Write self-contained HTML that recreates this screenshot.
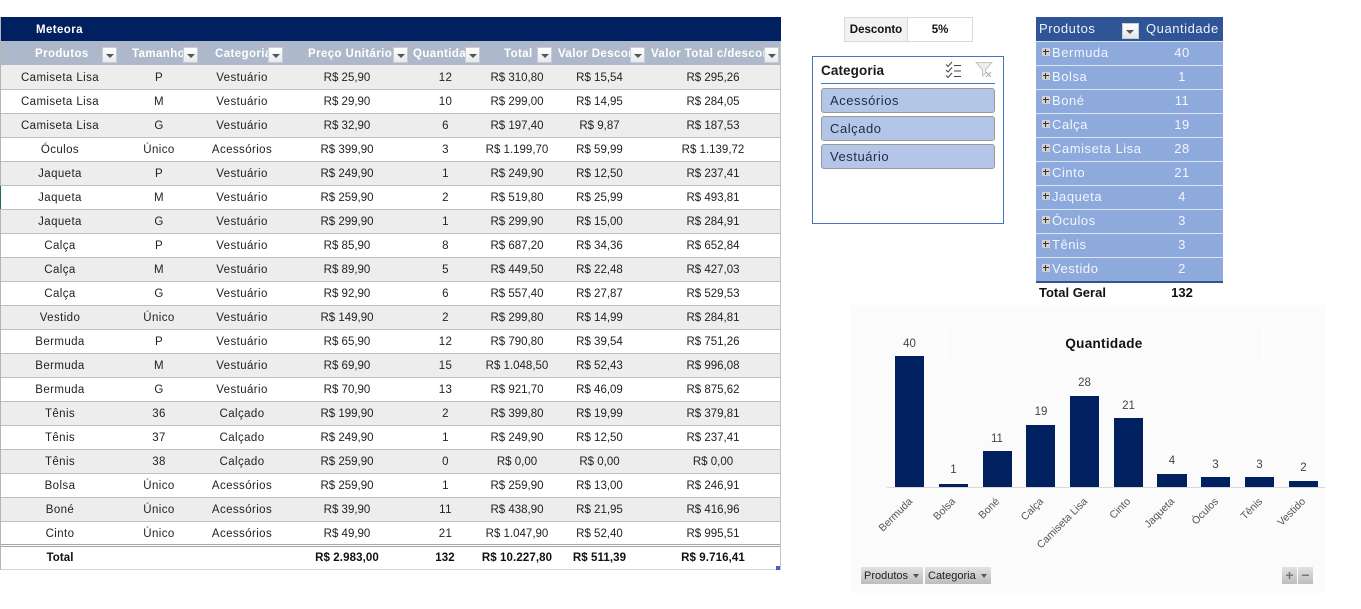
<!DOCTYPE html>
<html lang="pt">
<head>
<meta charset="utf-8">
<title>Meteora</title>
<style>
html,body{margin:0;padding:0;background:#fff;}
body{position:relative;width:1361px;height:609px;overflow:hidden;font-family:"Liberation Sans",sans-serif;color:#222;}
.a{position:absolute;}
#tbl{position:absolute;left:1px;top:65px;width:779px;border-collapse:collapse;table-layout:fixed;font-size:11.5px;letter-spacing:.4px;}
#tbl td{height:24px;padding:2px 0 0;box-sizing:border-box;text-align:center;border-bottom:1px solid #bfbfbf;white-space:nowrap;overflow:hidden;}
#tbl tr:nth-child(odd) td{background:#ededed;}
#tbl td:nth-child(4),#tbl td:nth-child(6),#tbl td:nth-child(7),#tbl td:nth-child(8){letter-spacing:0;}
#tbl td:nth-child(5){padding-left:1px;}
.h{position:absolute;top:41px;height:24px;line-height:26px;color:#fff;font-weight:bold;font-size:11.5px;letter-spacing:.4px;white-space:nowrap;overflow:hidden;}
.fb{position:absolute;width:15px;height:16px;box-sizing:border-box;background:linear-gradient(#fff,#e8e9ec);border:1px solid #c8ccd4;}
.fb:after{content:"";position:absolute;left:3px;top:6px;border-left:4px solid transparent;border-right:4px solid transparent;border-top:4px solid #555;}
.tot{position:absolute;top:546px;height:24px;line-height:24px;font-weight:bold;font-size:11.5px;color:#111;text-align:center;letter-spacing:.1px;white-space:nowrap;}
.sb{position:absolute;left:821px;width:174px;height:25px;box-sizing:border-box;background:#b4c6e7;border:1px solid #999;border-radius:3px;font-size:13px;letter-spacing:.55px;line-height:23px;padding-left:8px;color:#1c2b45;}
.pr{position:absolute;left:1036px;width:187px;height:24px;box-sizing:border-box;background:#8ea9db;border-top:1px solid #d9e4f5;color:#f2f6fd;font-size:13px;letter-spacing:.55px;line-height:23px;}
.pr b{font-weight:normal;position:absolute;left:16px;top:-1px;}
.pr i{font-style:normal;position:absolute;left:116px;width:60px;text-align:center;top:-1px;}
.pr s{position:absolute;left:6px;top:6px;width:8px;height:8px;background:#d0d0d0;text-decoration:none;}
.pr s:before{content:"";position:absolute;left:1px;top:3px;width:6px;height:1px;background:#333;}
.pr s:after{content:"";position:absolute;left:3px;top:1px;width:1px;height:6px;background:#333;}
.gb{position:absolute;top:567px;height:17px;background:linear-gradient(#e2e2e2,#bdbdbd);font-size:11px;line-height:18px;color:#222;padding-left:3px;box-sizing:border-box;}
.gb.dd:after{content:"";position:absolute;right:4px;top:7px;border-left:3.5px solid transparent;border-right:3.5px solid transparent;border-top:4px solid #555;}
</style>
</head>
<body>

<!-- Main table -->
<div class="a" style="left:0;top:17px;width:1px;height:553px;background:#b5b5b5"></div>
<div class="a" style="left:0;top:186px;width:1px;height:23px;background:#1e7145"></div>
<div class="a" style="left:1px;top:17px;width:780px;height:24px;background:#002060"></div>
<div class="a" style="left:36px;top:17px;height:24px;line-height:27px;color:#fff;font-weight:bold;font-size:11.5px;letter-spacing:.4px">Meteora</div>
<div class="a" style="left:1px;top:41px;width:780px;height:24px;background:#adb9ca"></div>

<div class="h" style="left:35px;width:67px">Produtos</div>
<div class="h" style="left:132px;width:51px">Tamanho</div>
<div class="h" style="left:215px;width:53px">Categoria</div>
<div class="h" style="left:308px;width:84px">Preço Unitário</div>
<div class="h" style="left:413px;width:52px">Quantidade</div>
<div class="h" style="left:504px;width:33px">Total</div>
<div class="h" style="left:558px;width:72px">Valor Desconto</div>
<div class="h" style="left:651px;width:113px">Valor Total c/desconto</div>

<div class="fb" style="left:102px;top:47px"></div>
<div class="fb" style="left:183px;top:47px"></div>
<div class="fb" style="left:268px;top:47px"></div>
<div class="fb" style="left:393px;top:47px"></div>
<div class="fb" style="left:465px;top:47px"></div>
<div class="fb" style="left:537px;top:47px"></div>
<div class="fb" style="left:630px;top:47px"></div>
<div class="fb" style="left:764px;top:47px"></div>

<table id="tbl">
<colgroup><col style="width:118px"><col style="width:80px"><col style="width:86px"><col style="width:124px"><col style="width:72px"><col style="width:72px"><col style="width:93px"><col style="width:134px"></colgroup>
<tr><td>Camiseta Lisa</td><td>P</td><td>Vestuário</td><td>R$ 25,90</td><td>12</td><td>R$ 310,80</td><td>R$ 15,54</td><td>R$ 295,26</td></tr>
<tr><td>Camiseta Lisa</td><td>M</td><td>Vestuário</td><td>R$ 29,90</td><td>10</td><td>R$ 299,00</td><td>R$ 14,95</td><td>R$ 284,05</td></tr>
<tr><td>Camiseta Lisa</td><td>G</td><td>Vestuário</td><td>R$ 32,90</td><td>6</td><td>R$ 197,40</td><td>R$ 9,87</td><td>R$ 187,53</td></tr>
<tr><td>Óculos</td><td>Único</td><td>Acessórios</td><td>R$ 399,90</td><td>3</td><td>R$ 1.199,70</td><td>R$ 59,99</td><td>R$ 1.139,72</td></tr>
<tr><td>Jaqueta</td><td>P</td><td>Vestuário</td><td>R$ 249,90</td><td>1</td><td>R$ 249,90</td><td>R$ 12,50</td><td>R$ 237,41</td></tr>
<tr><td>Jaqueta</td><td>M</td><td>Vestuário</td><td>R$ 259,90</td><td>2</td><td>R$ 519,80</td><td>R$ 25,99</td><td>R$ 493,81</td></tr>
<tr><td>Jaqueta</td><td>G</td><td>Vestuário</td><td>R$ 299,90</td><td>1</td><td>R$ 299,90</td><td>R$ 15,00</td><td>R$ 284,91</td></tr>
<tr><td>Calça</td><td>P</td><td>Vestuário</td><td>R$ 85,90</td><td>8</td><td>R$ 687,20</td><td>R$ 34,36</td><td>R$ 652,84</td></tr>
<tr><td>Calça</td><td>M</td><td>Vestuário</td><td>R$ 89,90</td><td>5</td><td>R$ 449,50</td><td>R$ 22,48</td><td>R$ 427,03</td></tr>
<tr><td>Calça</td><td>G</td><td>Vestuário</td><td>R$ 92,90</td><td>6</td><td>R$ 557,40</td><td>R$ 27,87</td><td>R$ 529,53</td></tr>
<tr><td>Vestido</td><td>Único</td><td>Vestuário</td><td>R$ 149,90</td><td>2</td><td>R$ 299,80</td><td>R$ 14,99</td><td>R$ 284,81</td></tr>
<tr><td>Bermuda</td><td>P</td><td>Vestuário</td><td>R$ 65,90</td><td>12</td><td>R$ 790,80</td><td>R$ 39,54</td><td>R$ 751,26</td></tr>
<tr><td>Bermuda</td><td>M</td><td>Vestuário</td><td>R$ 69,90</td><td>15</td><td>R$ 1.048,50</td><td>R$ 52,43</td><td>R$ 996,08</td></tr>
<tr><td>Bermuda</td><td>G</td><td>Vestuário</td><td>R$ 70,90</td><td>13</td><td>R$ 921,70</td><td>R$ 46,09</td><td>R$ 875,62</td></tr>
<tr><td>Tênis</td><td>36</td><td>Calçado</td><td>R$ 199,90</td><td>2</td><td>R$ 399,80</td><td>R$ 19,99</td><td>R$ 379,81</td></tr>
<tr><td>Tênis</td><td>37</td><td>Calçado</td><td>R$ 249,90</td><td>1</td><td>R$ 249,90</td><td>R$ 12,50</td><td>R$ 237,41</td></tr>
<tr><td>Tênis</td><td>38</td><td>Calçado</td><td>R$ 259,90</td><td>0</td><td>R$ 0,00</td><td>R$ 0,00</td><td>R$ 0,00</td></tr>
<tr><td>Bolsa</td><td>Único</td><td>Acessórios</td><td>R$ 259,90</td><td>1</td><td>R$ 259,90</td><td>R$ 13,00</td><td>R$ 246,91</td></tr>
<tr><td>Boné</td><td>Único</td><td>Acessórios</td><td>R$ 39,90</td><td>11</td><td>R$ 438,90</td><td>R$ 21,95</td><td>R$ 416,96</td></tr>
<tr><td>Cinto</td><td>Único</td><td>Acessórios</td><td>R$ 49,90</td><td>21</td><td>R$ 1.047,90</td><td>R$ 52,40</td><td>R$ 995,51</td></tr>
</table>

<div class="a" style="left:780px;top:41px;width:1px;height:529px;background:#c4c4c4"></div>
<div class="a" style="left:1px;top:544px;width:779px;height:1px;background:#a6a6a6"></div>
<div class="a" style="left:1px;top:545px;width:779px;height:1px;background:#fff"></div>
<div class="a" style="left:1px;top:546px;width:779px;height:1px;background:#a6a6a6"></div>
<div class="a" style="left:1px;top:569px;width:780px;height:1px;background:#d4d4d4"></div>
<div class="tot" style="left:1px;width:118px">Total</div>
<div class="tot" style="left:285px;width:124px">R$ 2.983,00</div>
<div class="tot" style="left:409px;width:72px">132</div>
<div class="tot" style="left:481px;width:72px">R$ 10.227,80</div>
<div class="tot" style="left:553px;width:93px">R$ 511,39</div>
<div class="tot" style="left:646px;width:134px">R$ 9.716,41</div>
<div class="a" style="left:776px;top:566px;width:4px;height:4px;background:#4a60b0"></div>

<!-- Desconto -->
<div class="a" style="left:844px;top:17px;width:64px;height:25px;box-sizing:border-box;background:#f2f2f2;border:1px solid #d9d9d9;font-weight:bold;font-size:11.5px;line-height:25px;text-align:center;color:#111">Desconto</div>
<div class="a" style="left:907px;top:17px;width:66px;height:25px;box-sizing:border-box;background:#fff;border:1px solid #d9d9d9;font-weight:bold;font-size:11.5px;line-height:25px;text-align:center;color:#111">5%</div>

<!-- Slicer -->
<div class="a" style="left:812px;top:56px;width:192px;height:168px;box-sizing:border-box;border:1px solid #4472c4;background:#fff"></div>
<div class="a" style="left:821px;top:61px;font-size:13.5px;font-weight:bold;line-height:19px;color:#1a1a1a;letter-spacing:.1px">Categoria</div>
<div class="a" style="left:821px;top:83px;width:174px;height:1px;background:#4472c4"></div>
<svg class="a" style="left:944px;top:61px" width="50" height="18" viewBox="0 0 50 18">
  <g fill="none" stroke="#444" stroke-width="1">
    <path d="M2 3.500l2 2 4-4.500M2 9l2 2 4-4.500M2 14.500l2 2 4-4.500"/>
    <path d="M10 4.500h7M10 10h7M10 15.500h7"/>
    <path d="M32 1.500h16l-6.500 7v4l-3 2.500v-6.500z" stroke="#c4c4c4" fill="#eeeeee"/>
    <path d="M42 11l5 5M47 11l-5 5" stroke="#aaa"/>
  </g>
</svg>
<div class="sb" style="top:88px">Acessórios</div>
<div class="sb" style="top:116px">Calçado</div>
<div class="sb" style="top:144px">Vestuário</div>

<!-- Pivot -->
<div class="a" style="left:1036px;top:17px;width:187px;height:24px;background:#2f5597;color:#eef3fb;font-size:13px;letter-spacing:.55px;line-height:23px"><span class="a" style="left:3px;top:0">Produtos</span><span class="a" style="left:110px;top:0">Quantidade</span></div>
<div class="fb" style="left:1122px;top:23px;width:17px;background:linear-gradient(#fff,#e4e6ea)"></div>
<div class="pr" style="top:41px"><s></s><b>Bermuda</b><i>40</i></div>
<div class="pr" style="top:65px"><s></s><b>Bolsa</b><i>1</i></div>
<div class="pr" style="top:89px"><s></s><b>Boné</b><i>11</i></div>
<div class="pr" style="top:113px"><s></s><b>Calça</b><i>19</i></div>
<div class="pr" style="top:137px"><s></s><b>Camiseta Lisa</b><i>28</i></div>
<div class="pr" style="top:161px"><s></s><b>Cinto</b><i>21</i></div>
<div class="pr" style="top:185px"><s></s><b>Jaqueta</b><i>4</i></div>
<div class="pr" style="top:209px"><s></s><b>Óculos</b><i>3</i></div>
<div class="pr" style="top:233px"><s></s><b>Tênis</b><i>3</i></div>
<div class="pr" style="top:257px"><s></s><b>Vestido</b><i>2</i></div>
<div class="a" style="left:1036px;top:281px;width:187px;height:2px;background:#2f5597"></div>
<div class="a" style="left:1039px;top:283px;font-size:13px;font-weight:bold;line-height:19px;color:#111">Total Geral</div>
<div class="a" style="left:1152px;width:60px;top:283px;font-size:13px;font-weight:bold;line-height:19px;color:#111;text-align:center">132</div>

<!-- Chart -->
<div class="a" style="left:851px;top:305px;width:474px;height:288px;background:#fbfbfb"></div>
<svg class="a" style="left:851px;top:305px" width="474" height="288" viewBox="851 305 474 288" font-family="Liberation Sans, sans-serif">
  <rect x="945.500" y="326.500" width="318" height="37" rx="5" fill="none" stroke="#fff"/>
  <text x="1104" y="348" text-anchor="middle" font-size="13.500" font-weight="bold" fill="#111" letter-spacing=".3">Quantidade</text>
  <g fill="#002060">
    <rect x="895" y="356" width="29" height="131"/>
    <rect x="939" y="484" width="29" height="3"/>
    <rect x="983" y="451" width="29" height="36"/>
    <rect x="1026" y="425" width="29" height="62"/>
    <rect x="1070" y="396" width="29" height="91"/>
    <rect x="1114" y="418" width="29" height="69"/>
    <rect x="1157" y="474" width="30" height="13"/>
    <rect x="1201" y="477" width="29" height="10"/>
    <rect x="1245" y="477" width="29" height="10"/>
    <rect x="1289" y="481" width="29" height="6"/>
  </g>
  <rect x="887" y="487" width="438" height="1" fill="#d9d9d9"/>
  <g font-size="11.500" fill="#444" text-anchor="middle">
    <text x="909.500" y="347">40</text>
    <text x="953.500" y="473">1</text>
    <text x="997" y="442">11</text>
    <text x="1041" y="415">19</text>
    <text x="1084.500" y="386">28</text>
    <text x="1128.500" y="409">21</text>
    <text x="1172" y="464">4</text>
    <text x="1215.500" y="468">3</text>
    <text x="1259.500" y="468">3</text>
    <text x="1303.500" y="471">2</text>
  </g>
  <g font-size="10.500" fill="#555" text-anchor="end">
    <text transform="translate(913 502) rotate(-45)">Bermuda</text>
    <text transform="translate(956 502) rotate(-45)">Bolsa</text>
    <text transform="translate(1000 502) rotate(-45)">Boné</text>
    <text transform="translate(1044 502) rotate(-45)">Calça</text>
    <text transform="translate(1088 502) rotate(-45)">Camiseta Lisa</text>
    <text transform="translate(1131 502) rotate(-45)">Cinto</text>
    <text transform="translate(1175 502) rotate(-45)">Jaqueta</text>
    <text transform="translate(1219 502) rotate(-45)">Óculos</text>
    <text transform="translate(1263 502) rotate(-45)">Tênis</text>
    <text transform="translate(1306 502) rotate(-45)">Vestido</text>
  </g>
</svg>
<div class="gb dd" style="left:861px;width:62px">Produtos</div>
<div class="gb dd" style="left:925px;width:66px">Categoria</div>
<div class="gb" style="left:1282px;width:15px;padding:0;text-align:center;color:#777;font-weight:bold;font-size:14px;line-height:17px">+</div>
<div class="gb" style="left:1298px;width:15px;padding:0;text-align:center;color:#777;font-weight:bold;font-size:14px;line-height:17px">−</div>
</body>
</html>
